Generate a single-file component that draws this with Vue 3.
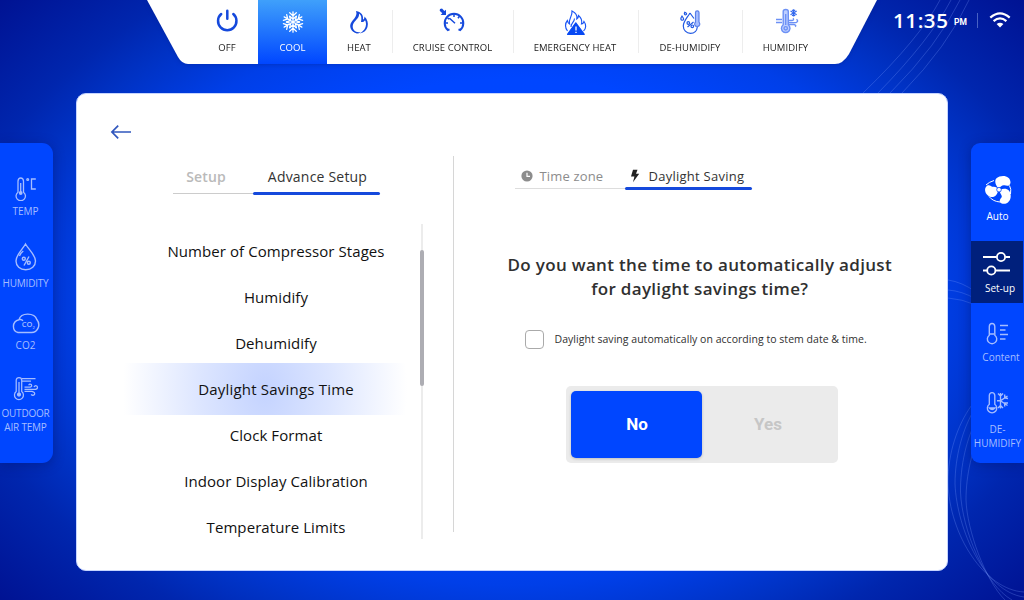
<script setup>
import { ref } from 'vue'

const modes = [
  { id: 'off', label: 'OFF' },
  { id: 'cool', label: 'COOL' },
  { id: 'heat', label: 'HEAT' },
  { id: 'cruise', label: 'CRUISE CONTROL' },
  { id: 'emergency', label: 'EMERGENCY HEAT' },
  { id: 'dehumidify', label: 'DE-HUMIDIFY' },
  { id: 'humidify', label: 'HUMIDIFY' },
]
const mode = ref('cool')

const settings = [
  'Number of Compressor Stages',
  'Humidify',
  'Dehumidify',
  'Daylight Savings Time',
  'Clock Format',
  'Indoor Display Calibration',
  'Temperature Limits',
]
const setting = ref('Daylight Savings Time')
const auto = ref(false)
const answer = ref('No')
const arms = [0, 60, 120, 180, 240, 300]
</script>

<template>
  <div class="screen">
    <svg class="backdrop" viewBox="0 0 1024 600" fill="none" stroke="#7fa0ff" stroke-opacity=".27" stroke-width="1">
      <path d="M940 0Q920 38 863 93M951 0Q930 40 878 93M960 0Q938 45 890 93M969 0Q948 46 902 93" />
      <path d="M1024 378C985 370 948 425 948 482C949 535 985 590 1024 592" />
      <path d="M1024 385C985 370 955 430 955 484C957 530 985 592 1024 597" />
      <path d="M1024 394C985 380 960 440 960.500 492C962 530 985 585 1012 600" />
      <path d="M1024 402C990 395 966 450 966 500C967 530 985 580 1005 600" />
      <path d="M948 280Q962 282 976 292M948 290Q962 291 976 299M948 298Q962 299 976 305" />
    </svg>

    <header class="top">
      <nav class="modes">
        <svg class="modes-shape" viewBox="0 0 730 64"><path fill="#fff" d="M0 0H730L702 54Q696 64 688 64H41Q35 64 31 57Z" /></svg>
        <button v-for="m in modes" :key="m.id" class="mode" :class="[m.id, { active: mode === m.id }]" @click="mode = m.id">
          <svg v-if="m.id === 'off'" class="mode-icon" viewBox="213 7 28 28" fill="none" stroke="#1549dc" stroke-width="2.5" stroke-linecap="round">
            <path d="M221.200 14A9.200 9.200 0 1 0 233.300 14M227.300 10.700V18.800" />
          </svg>
          <svg v-else-if="m.id === 'cool'" class="mode-icon" viewBox="279 8 28 28" fill="none" stroke="#fff" stroke-width="1.3" stroke-linecap="round">
            <path v-for="a in arms" :key="a" :transform="`rotate(${a} 293 22)`" d="M293 22V11.800M289.700 12.800L293 15.900L296.300 12.800M289.800 16.300L293 19.300L296.200 16.300" />
          </svg>
          <svg v-else-if="m.id === 'heat'" class="mode-icon" viewBox="345 8 28 28" fill="#1549dc">
            <path fill-rule="evenodd" d="M356 11C362 12 363.500 16 363 19.500C364 19.500 364.500 18 364.500 16.500C367.500 19.500 368.500 23 367.500 27C366.500 30.500 364 32.500 360 33.500C363.500 31 366 28 366 24.500C366 22.500 365.500 20.800 365 20.200C364.200 21.800 362.500 22.200 361 22C361.800 18 361.500 15 359 13.500C359.500 17 357 19 355 21.200C351.500 25 351.800 30 357.500 33.500C352.500 32.500 350 29 350.200 25.500C350.500 20.500 358.500 17 356 11Z" />
            <path d="M352 27C353 31 356.500 32.500 361 32.300L358 33.600C354.500 33 352 31 352 27Z" />
          </svg>
          <svg v-else-if="m.id === 'cruise'" class="mode-icon" viewBox="439 7 28 28" fill="none" stroke="#1549dc" stroke-width="2">
            <path d="M449.500 29.300L447.800 30A9.300 9.300 0 1 1 460.200 30L458.500 29.300" />
            <path stroke-width="1.500" d="M454 13.500V17M459.500 16.200L458 18.300M463 23H460M445 23H448M447.500 18L449.300 19M449.500 18.200L455 23.200" />
            <path stroke="none" fill="#1549dc" d="M440 9L442 8.500L444.400 11L446 9.700L446 15H440.700L442.300 13.200L439.700 10.700Z" />
          </svg>
          <svg v-else-if="m.id === 'emergency'" class="mode-icon" viewBox="561 8 28 28" fill="none" stroke="#1a55f5" stroke-width="1.150">
            <path d="M567.500 31C565 28 564.800 23.500 567.400 20.500C567.800 22.700 568.500 23.500 569.500 24C568.200 18.500 572.500 17 572 11C576 13 577.500 16 576.800 19C578 18.500 578.500 17 578.500 15.500C581.500 18 582.200 21 581.500 24C583 23.800 583.500 23 584 21.500C586.300 24.500 586.300 28.500 583.500 31M571 27C570.500 23.500 574.500 22 574.500 18.500" />
            <path fill="#0749f3" stroke="#0749f3" stroke-linejoin="round" d="M575.800 22.800L584.300 34.300H567.500Z" />
            <path stroke="#fff" stroke-width="1.300" d="M576 26.500V30.500M576 31.700V33" />
          </svg>
          <svg v-else-if="m.id === 'dehumidify'" class="mode-icon" viewBox="676 8 28 28" fill="none" stroke="#2159e3" stroke-width="1.200">
            <path d="M690 13C687 18 683.300 21.500 683.300 26C683.300 30 686.300 33.300 690.500 33.300C694.500 33.300 697 30.500 697.300 27M690 13Q692 15.800 694 18.500" />
            <path d="M695.500 12.500Q695.500 10.800 697.200 10.800Q699 10.800 699 12.500V22Q700 23.300 699.700 24.700Q699 26.500 697.200 26.500Q695.300 26.500 694.700 24.700Q694.500 23.200 695.500 22Z" fill="#a6bdff" stroke="#5b80e8" />
            <path d="M684.800 12.200C683.600 14 685 15.300 686.200 14.500C687.300 13.700 686 12.800 684.800 12.200ZM682 16C680 18.800 681 20.500 682.500 20.200C684.500 20 683.500 18 682 16ZM687.500 27L693.500 22" />
            <circle cx="688.300" cy="23" r="1.300" /><circle cx="692.300" cy="26.300" r="1.300" />
          </svg>
          <svg v-else class="mode-icon" viewBox="772 8 28 28" fill="none" stroke="#6d91f5" stroke-width="1.400">
            <path fill="#bdceff" d="M783.200 11.500Q783.200 9.500 785.700 9.500Q788.300 9.500 788.300 11.500V24.700Q790 26.200 790 28.400Q789.300 32.500 785.700 32.500Q782 32.500 781.400 28.400Q781.400 26.200 783.200 24.700Z" />
            <circle cx="785.700" cy="28.300" r="1.700" />
            <path d="M785.700 14V25M776 19.500H782M776 22.500H782M789 20.500H792Q794.500 20 793 18.300M789 22.600H796Q799 21.500 796.500 19.300M789 24.500H794Q797 25.500 795 26.500" />
            <path stroke="#3268ee" stroke-width="1.100" d="M793.600 9.300V16.500M790.500 11.100L796.700 14.700M796.700 11.100L790.500 14.700M792 9.900L793.600 11.300L795.200 9.900M792 15.900L793.600 14.500L795.200 15.900" />
          </svg>
          <span>{{ m.label }}</span>
        </button>
      </nav>
      <div class="status">
        <span class="clock">11:35</span><span class="pm">PM</span><i class="bar"></i>
        <svg class="wifi" viewBox="0 0 22 16" fill="none" stroke="#fff" stroke-width="2.200">
          <path d="M1.300 5.700Q11-2.800 20.700 5.700M4.600 9.200Q11 3.700 17.400 9.200" /><path stroke="none" fill="#fff" d="M7.600 12.100Q11 9.400 14.400 12.100L11 15.400Z" />
        </svg>
      </div>
    </header>

    <div class="body">
      <aside class="side left">
        <div class="stat temp">
          <svg width="28" height="26" viewBox="12 175 28 26" fill="none" stroke="#a5bdff" stroke-width="1.300">
            <path d="M18 192.200V181Q18.300 178 20.700 178Q23.200 178 23.500 181V192.200A4.700 4.700 0 1 1 18 192.200Z" /><circle cx="20.700" cy="193" r="1.900" fill="#a5bdff" stroke="none" /><path d="M20.700 183V193M35.800 179H31.500V189H35.800" /><circle cx="27.700" cy="179.500" r=".9" />
          </svg>
          <span>TEMP</span>
        </div>
        <div class="stat humidity">
          <svg width="28" height="30" viewBox="12 242 28 30" fill="none" stroke="#a5bdff" stroke-width="1.400">
            <path d="M25.500 244C22 250 16 255 16 261C16 266 20 269.700 25.700 269.700C31.500 269.700 35.500 266 35.500 261C35.500 255 29 250 25.500 244ZM19.500 256Q21 252.500 23.300 251M24 265.500L29 256.500" /><circle cx="23.800" cy="258.800" r="1.500" /><circle cx="28.800" cy="262.800" r="1.500" />
          </svg>
          <span>HUMIDITY</span>
        </div>
        <div class="stat co2">
          <svg width="28" height="22" viewBox="12 313 28 22" fill="none" stroke="#a5bdff" stroke-width="1.400">
            <path d="M18 332.500C12 331 11.500 321.500 19 319.700C21 312 34.500 312.500 36.800 319.500C41 324.500 38 332.500 31.500 332.500ZM19 319.700Q21.500 319 23 320.800" /><text x="21.800" y="327.300" font-size="7.500" font-weight="600" fill="#a5bdff" stroke="none">CO<tspan font-size="4" dy="1.800">2</tspan></text>
          </svg>
          <span>CO2</span>
        </div>
        <div class="stat outdoor">
          <svg width="28" height="26" viewBox="12 375 28 26" fill="none" stroke="#a5bdff" stroke-width="1.250">
            <path d="M16.200 391.500V380Q16.500 377.500 19 377.500Q21.700 377.500 21.700 380V391.500A4.500 4.500 0 1 1 16.200 391.500ZM19 382V393M22 378.500H35.500M22 381H31" /><circle cx="19" cy="394.500" r="1.500" fill="#a5bdff" />
            <path d="M24.500 387.200H30Q32.500 386.500 31.300 384.600Q29.500 383.500 28.700 385.300M24.500 389.300H35.500Q38.500 388.500 37 386.200Q35 385 34 387M24.500 391.300H32Q35.500 392.500 34.500 394.500Q33 396 31 394.500" />
          </svg>
          <span>OUTDOOR<br />AIR TEMP</span>
        </div>
      </aside>

      <main class="card">
        <button class="back">
          <svg width="22" height="16" viewBox="110 124 22 16" fill="none" stroke="#3157bd" stroke-width="1.700"><path d="M131 132H112M118.200 125.700L111.900 132L118.200 138.300" /></svg>
        </button>
        <div class="cols">
          <section class="menu">
            <div class="tabs">
              <button class="tab setup">Setup</button><button class="tab advance on">Advance Setup</button>
            </div>
            <div class="scroller">
              <ul>
                <li v-for="s in settings" :key="s" :class="{ sel: s === setting }" @click="setting = s">{{ s }}</li>
              </ul>
              <div class="track"><div class="thumb"></div></div>
            </div>
          </section>
          <section class="detail">
            <div class="tabs">
              <button class="tab zone">
                <svg width="12" height="12" viewBox="0 0 12 12"><circle cx="6" cy="6" r="5.600" fill="#8c8c8c" /><path d="M6 2.800V6.300H9" fill="none" stroke="#fff" stroke-width="1.200" /></svg>Time zone
              </button>
              <button class="tab saving on">
                <svg width="10" height="14" viewBox="0 0 10 14"><path fill="#222" d="M3 .8H7.500L6 4.800H9.200L3 13.200L4.400 7.600H1Z" /></svg>Daylight Saving
              </button>
            </div>
            <h1>Do you want the time to automatically adjust<br />for daylight savings time?</h1>
            <label class="check"><input v-model="auto" type="checkbox" /><span>Daylight saving automatically on according to stem date &amp; time.</span></label>
            <div class="toggle">
              <button v-for="a in ['No', 'Yes']" :key="a" :class="{ on: answer === a }" @click="answer = a">{{ a }}</button>
            </div>
          </section>
        </div>
      </main>

      <aside class="side right">
        <div class="stat auto">
          <svg width="30" height="30" viewBox="982 175 30 30" fill="#fff">
            <path d="M997.500 188.500C993.500 183.500 992.500 178.500 998.500 176.500C1004 174.800 1009.500 177 1009.500 182.500C1009.200 186.500 1006 186 1003.500 185.300C1001 184.800 1000 186.500 997.500 188.500Z" />
            <path d="M997 189.800C997 195.500 992.500 198.500 988.500 196.500C984 194.300 982.500 188.500 986 185.700C989 184 990 187 992.500 186.800C995 186.700 996.500 188 997 189.800Z" />
            <path d="M999 189.800C1005 187 1009.500 190 1009.700 195.500C1010 200.500 1006.500 204.500 1001.500 203.700C997.500 202.800 998.500 199.500 1000.500 197.500C1002 195.500 998 193.500 999 189.800Z" />
            <path fill="none" stroke="#fff" d="M1008.500 185.500Q1010.500 189 1009.500 194M988 196.500Q992 201.500 999 202M985 185Q988 182 993 180.500" />
            <circle cx="998" cy="189.700" r="2.300" fill="#fff" stroke="#0046ff" stroke-width=".8" />
          </svg>
          <span>Auto</span>
        </div>
        <div class="stat settings">
          <svg width="28" height="26" viewBox="984 251 28 26" fill="none" stroke="#fff" stroke-width="1.800">
            <path d="M984 257H997.500M1006.500 257H1011M984 270.500H988M997 270.500H1011" /><circle cx="1002" cy="257" r="4.100" /><circle cx="992.300" cy="270.500" r="4.100" />
          </svg>
          <span>Set-up</span>
        </div>
        <div class="stat content">
          <svg width="28" height="26" viewBox="984 321 28 26" fill="none" stroke="#a5bdff" stroke-width="1.400">
            <path d="M989.300 335.200V326.500Q989.500 323.500 992 323.500Q994.600 323.500 994.800 326.500V335.200A4.700 4.700 0 1 1 989.300 335.200ZM990 334H994M1000 325.500H1008M1000 330H1005.500M1000 334.500H1008M1000 339H1005.500" />
          </svg>
          <span>Content</span>
        </div>
        <div class="stat dehum">
          <svg width="28" height="26" viewBox="984 390 28 26" fill="none" stroke="#a5bdff" stroke-width="1.350">
            <path d="M989.300 404.300V395.500Q989.500 392.600 992 392.600Q994.600 392.600 994.800 395.500V404.300A4.700 4.700 0 1 1 989.300 404.300Z" /><path d="M989.500 408Q992 411 995 408Z" fill="#a5bdff" />
            <path d="M1000.500 393V408.500M997 400.700H1000.500L1007.500 396M1000.500 400.700L1007.500 405.500M998 393.500L1000.500 396L1003 393.500M998 408L1000.500 405.500L1003 408M1004.700 394.500V398L1008 398.500M1008 403H1004.700V406.500" />
          </svg>
          <span>DE-<br />HUMIDIFY</span>
        </div>
      </aside>
    </div>
  </div>
</template>

<style>
body { margin: 0; }
</style>

<style scoped>
.screen {
  position: relative;
  width: 1024px;
  height: 600px;
  overflow: hidden;
  background: radial-gradient(ellipse 680px 460px at 512px 300px, #0048ff 0%, #0046ff 48%, #003fe8 62%, #0032c4 74%, #0026ae 82%, #001292 100%);
  font-family: "Open Sans", "Noto Sans", sans-serif;
}
.backdrop { position: absolute; inset: 0; width: 1024px; height: 600px; }
button { border: 0; padding: 0; margin: 0; background: none; font: inherit; color: inherit; }
.top { position: relative; display: flex; height: 93px; padding-left: 147px; }
.modes { position: relative; display: flex; width: 730px; height: 64px; padding-left: 49px; box-sizing: border-box; flex: none; filter: drop-shadow(0 1px 2px #001a8055); }
.modes-shape { position: absolute; inset: 0; width: 730px; height: 64px; }
.mode { position: relative; display: flex; flex-direction: column; align-items: center; padding-top: 8px; height: 64px; font-size: 9.5px; letter-spacing: .08px; line-height: 14px; color: #222; box-sizing: border-box; white-space: nowrap; }
.mode-icon { width: 28px; height: 28px; margin-bottom: 5px; flex: none; }
.off { width: 62px; }
.off .mode-icon { margin-top: -1px; margin-bottom: 6px; }
.cool { width: 69px; }
.heat { width: 66px; padding-right: 2px; }
.cruise { width: 121px; padding-right: 2px; }
.cruise .mode-icon { margin-top: -1px; margin-bottom: 6px; }
.emergency { width: 125px; padding-right: 3px; }
.dehumidify { width: 104px; padding-right: 2px; }
.humidify { width: 87px; padding-right: 2px; }
.heat::after, .cruise::after, .emergency::after, .dehumidify::after { content: ""; position: absolute; right: 0; top: 10px; width: 1px; height: 43px; background: #ededed; }
.mode.active { background: linear-gradient(#3fa0fb, #0046ff); color: #fff; }
.status { display: flex; align-items: center; height: 40px; padding-left: 16px; color: #fff; }
.clock { font-size: 20.5px; font-weight: 600; line-height: 40px; width: 61px; letter-spacing: .6px; }
.pm { font-family: Roboto, sans-serif; font-weight: 700; font-size: 8.5px; width: 23px; padding-top: 4px; }
.bar { width: 1px; height: 15px; background: #4862c4; margin-right: 11px; }
.wifi { width: 22px; height: 16px; }

.body { position: relative; display: flex; align-items: flex-start; }
.side { width: 53px; height: 320px; margin-top: 50px; background: #0046ff; box-shadow: 0 2px 12px #00156c70; box-sizing: border-box; }
.left { border-radius: 0 11px 11px 0; padding-top: 32px; }
.right { border-radius: 9px 0 0 9px; padding-top: 32px; }
.stat { display: flex; flex-direction: column; align-items: center; font-size: 10px; line-height: 14px; color: #a5bdff; text-align: center; white-space: nowrap; }
.left .stat { margin-right: 2px; }
.stat svg { flex: none; }
.temp { height: 67px; gap: 3px; }
.humidity { height: 71px; gap: 4px; }
.co2 { height: 62px; gap: 3px; }
.outdoor { gap: 5px; }
.outdoor span, .humidity span { letter-spacing: -.2px; }
.auto { height: 66px; gap: 4px; color: #fff; }
.settings { height: 62px; padding-top: 10px; gap: 4px; color: #fff; background: #00207c; box-sizing: border-box; margin-right: 1px; }
.settings span { padding-left: 6px; }
.content { height: 69px; padding-top: 18px; gap: 3px; box-sizing: border-box; }
.content span { padding-left: 7px; }
.dehum { padding-top: 18px; gap: 6px; }

.card { width: 872px; height: 478px; margin: 0 23px; background: #fff; border-radius: 10px; box-sizing: border-box; border: 1px solid #c5d4ff; flex: none; }
.back { display: flex; padding: 30px 0 0 33px; height: 62px; box-sizing: border-box; }
.cols { display: flex; height: 376px; }
.menu { width: 377px; border-right: 1px solid #d6d6d6; box-sizing: border-box; }
.tabs { display: flex; }
.tab { font-size: 14px; line-height: 20px; box-sizing: border-box; }
.menu .tabs { margin-left: 96px; height: 39px; }
.menu .tab { padding-top: 4px; height: 38px; border-bottom: 1px solid #ccc; position: relative; }
.setup { width: 80px; color: #bababa; font-weight: 600; padding-right: 14px; letter-spacing: .15px; }
.advance { width: 127px; color: #333; letter-spacing: .2px; padding-left: 2px; }
.tab.on::after { content: ""; position: absolute; left: 0; right: 0; bottom: -2px; height: 3px; border-radius: 2px; background: #1549dc; }
.scroller { display: flex; margin: 29px 0 0 47px; height: 315px; }
ul { list-style: none; margin: 0; padding: 4px 0 0; width: 296px; box-sizing: border-box; }
li { height: 46px; line-height: 46px; text-align: center; font-size: 15px; letter-spacing: .08px; color: #111; width: 306px; padding-right: 2px; box-sizing: border-box; }
li.sel { height: 52px; line-height: 52px; margin: -3px 0; letter-spacing: .2px; background: radial-gradient(ellipse 142px 200px at 141px 50%, #c4d3ff 0%, #dce5ff 45%, #fff 100%) no-repeat; }
.track { width: 4px; height: 315px; background: linear-gradient(90deg, #fff 1px, #ececec 1px 3px, #fff 3px); }
.thumb { width: 4px; height: 136px; margin-top: 26px; border-radius: 2px; background: #adadb3; }

.detail { width: 494px; display: flex; flex-direction: column; }
.detail .tabs { margin-left: 61px; height: 34px; }
.detail .tab { position: relative; display: flex; align-items: center; height: 33px; padding-top: 8px; border-bottom: 1px solid #ddd; font-size: 13px; }
.zone { width: 110px; color: #8c8c8c; padding-left: 6px; gap: 7px; letter-spacing: .15px; }
.saving { width: 127px; color: #333; padding-left: 5px; gap: 9px; letter-spacing: .25px; }
h1 { margin: 63px 0 0; font-size: 17px; line-height: 24px; font-weight: 600; letter-spacing: .32px; text-align: center; color: #303030; white-space: nowrap; padding-right: 1px; }
.check { display: flex; align-items: center; margin: 28px 0 0 71px; height: 20px; font-size: 10.5px; letter-spacing: .03px; color: #303030; white-space: nowrap; }
.check input { appearance: none; box-sizing: border-box; width: 19px; height: 19px; margin: 0 11px 0 0; border: 1px solid #aaa; border-radius: 4px; background: #fff; }
.toggle { display: flex; margin: 37px 0 0 112px; width: 272px; height: 77px; padding: 5px; box-sizing: border-box; background: #ebebeb; border-radius: 5px; }
.toggle button { width: 131px; height: 67px; border-radius: 5px; padding: 0 0 2px 2px; box-sizing: border-box; font: 700 17px Roboto, sans-serif; color: #c6c6c6; }
.toggle button.on { background: #0046ff; color: #fff; box-shadow: 0 1px 3px #0003; }
</style>
